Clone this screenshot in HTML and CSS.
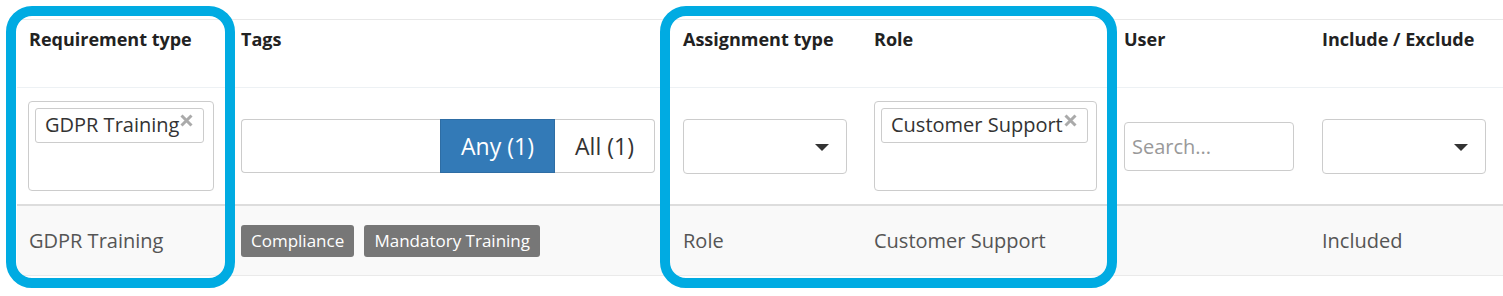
FILE: index.html
```html
<!DOCTYPE html>
<html lang="en">
<head>
    <meta charset="UTF-8">
    <title>Requirements</title>
    <link rel="stylesheet" href="styles.css">
</head>
<body>
    <div class="wrap">
        <table class="grid">
            <colgroup>
                <col class="c-req">
                <col class="c-tags">
                <col class="c-atype">
                <col class="c-role">
                <col class="c-user">
                <col class="c-incl">
            </colgroup>
            <thead>
                <tr class="head">
                    <th>Requirement type</th>
                    <th>Tags</th>
                    <th>Assignment type</th>
                    <th>Role</th>
                    <th>User</th>
                    <th>Include / Exclude</th>
                </tr>
                <tr class="filters">
                    <td>
                        <div class="multi multi-req">
                            <span class="chip">GDPR Training<svg class="chip-x" viewBox="0 0 13 13"><path d="M1.5 1.5L11.5 11.5M11.5 1.5L1.5 11.5"/></svg></span>
                        </div>
                    </td>
                    <td>
                        <div class="group">
                            <input type="text" class="group-input">
                            <button class="btn btn-on">Any (1)</button>
                            <button class="btn">All (1)</button>
                        </div>
                    </td>
                    <td>
                        <div class="select"><span class="caret"></span></div>
                    </td>
                    <td>
                        <div class="multi multi-role">
                            <span class="chip">Customer Support<svg class="chip-x" viewBox="0 0 13 13"><path d="M1.5 1.5L11.5 11.5M11.5 1.5L1.5 11.5"/></svg></span>
                        </div>
                    </td>
                    <td>
                        <input type="text" class="search" placeholder="Search...">
                    </td>
                    <td>
                        <div class="select"><span class="caret"></span></div>
                    </td>
                </tr>
            </thead>
            <tbody>
                <tr class="row">
                    <td>GDPR Training</td>
                    <td>
                        <span class="label">Compliance</span>
                        <span class="label">Mandatory Training</span>
                    </td>
                    <td>Role</td>
                    <td>Customer Support</td>
                    <td></td>
                    <td>Included</td>
                </tr>
            </tbody>
        </table>

        <div class="mark mark-req"></div>
        <div class="mark mark-assign"></div>
    </div>
</body>
</html>
```

FILE: styles.css
```css
body { margin: 0; font-family: "Open Sans", Arial, sans-serif; color: #333; background: #fff; }
.wrap { position: relative; height: 296px; padding-top: 19px; box-sizing: border-box; }

.grid { margin-left: 17px; width: 1486px; border-collapse: collapse; table-layout: fixed; border-top: 1px solid #e8e8e8; }
.c-req { width: 212px; }
.c-tags { width: 442px; }
.c-atype { width: 191px; }
.c-role { width: 250px; }
.c-user { width: 198px; }
.c-incl { width: 193px; }

th, td { padding: 0 12px; text-align: left; }
.head th { height: 68px; padding-top: 6px; vertical-align: top; font-size: 18px; line-height: 26px; font-weight: 700; color: #222; border-bottom: 1px solid #edf1f4; box-sizing: border-box; }
.filters td { height: 116px; vertical-align: middle; border-bottom: 2px solid #ddd; }
.row td { height: 69px; vertical-align: middle; background: #f9f9f9; font-size: 20px; color: #555; border-bottom: 1px solid #eaeaea; }

.multi { height: 90px; border: 1px solid #ccc; border-radius: 4px; box-sizing: border-box; padding: 6px; }
.multi-req { width: 186px; margin-left: -1px; }
.multi-role { width: 223px; }
.chip { display: inline-block; height: 35px; box-sizing: border-box; border: 1px solid #ccc; border-radius: 3px; padding: 0 10px 0 9px; font-size: 20px; line-height: 32px; color: #333; white-space: nowrap; }
.chip-x { display: inline-block; vertical-align: top; width: 13px; height: 13px; margin: 5px 0 0 1px; fill: none; stroke: #aaa; stroke-width: 3; }

.group { display: flex; width: 414px; height: 54px; }
.group-input { width: 199px; margin: 0; border: 1px solid #ccc; border-right: 0; border-radius: 4px 0 0 4px; box-sizing: border-box; }
.btn { margin: 0; padding: 0; font-family: inherit; font-size: 23px; border: 1px solid #ccc; background: #fff; color: #333; box-sizing: border-box; }
.btn-on { width: 115px; background: #337ab7; border-color: #2e6da4; color: #fff; }
.btn + .btn { width: 100px; border-left: 0; border-radius: 0 4px 4px 0; }

.select { position: relative; width: 164px; height: 55px; border: 1px solid #ccc; border-radius: 4px; box-sizing: border-box; }
.caret { position: absolute; right: 17px; top: 24px; width: 0; height: 0; border-left: 7px solid transparent; border-right: 7px solid transparent; border-top: 7px solid #333; }

.search { width: 170px; height: 49px; margin: 0; padding: 0 7px; border: 1px solid #ccc; border-radius: 4px; box-sizing: border-box; font-family: inherit; font-size: 20px; color: #555; }
.search::placeholder { color: #999; }

.label { display: inline-block; height: 32px; padding: 0 10px; margin-right: 5px; border-radius: 3px; background: #777; color: #fff; font-size: 17px; line-height: 32px; }

.mark { position: absolute; top: 6px; height: 282px; border: 10px solid #00abe2; border-radius: 26px; box-sizing: border-box; pointer-events: none; }
.mark-req { left: 6px; width: 229px; }
.mark-assign { left: 660px; width: 457px; }
```
